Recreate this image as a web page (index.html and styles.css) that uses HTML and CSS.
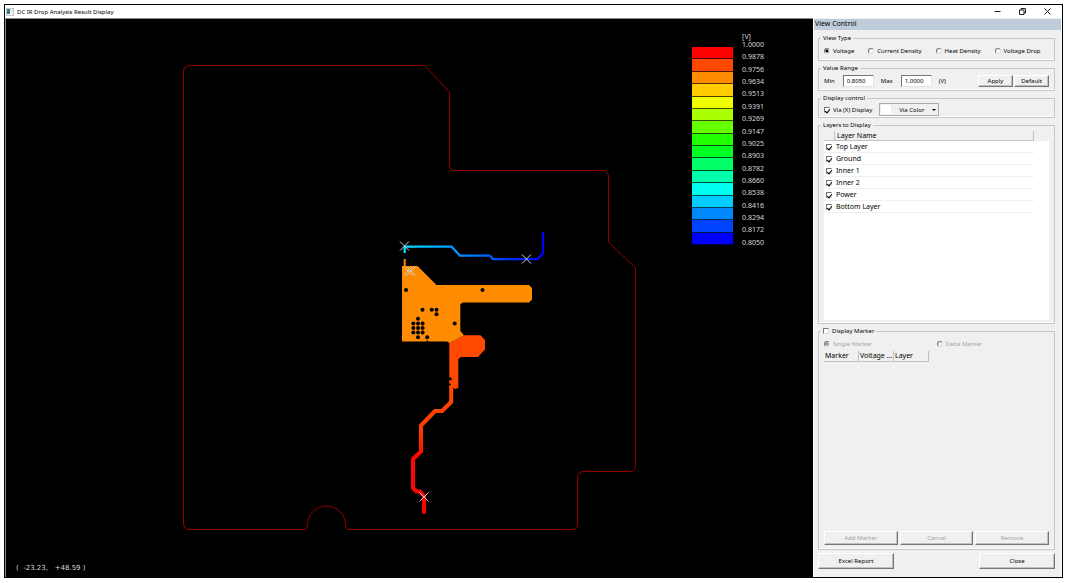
FILE: index.html
```html
<!DOCTYPE html>
<html lang="en">
<head>
    <meta charset="utf-8">
    <title>DC IR Drop Analysis Result Display</title>
    <link rel="stylesheet" href="styles.css">
</head>
<body>

    <div class="window">
        <header class="titlebar">
            <svg class="app-icon" viewBox="0 0 8 8">
                <rect x="0.5" y="0.5" width="7" height="7" fill="#f4f4f4" stroke="#c4c8cc"/>
                <rect x="1" y="1" width="3" height="5" fill="#2f7f78"/>
                <rect x="5" y="1" width="2" height="3" fill="#dfe6ea"/>
            </svg>
            <h1 class="title">DC IR Drop Analysis Result Display</h1>
            <div class="window-btns">
                <button class="window-btn" aria-label="Minimize">
                    <svg viewBox="0 0 7 7"><path d="M0.5 3.5H6.5"/></svg>
                </button>
                <button class="window-btn" aria-label="Restore">
                    <svg viewBox="0 0 7 7"><path d="M0.5 2H5V6.5H0.5ZM2 2V0.5H6.5V5H5"/></svg>
                </button>
                <button class="window-btn" aria-label="Close window">
                    <svg viewBox="0 0 7 7"><path d="M0.5 0.5L6.5 6.5M6.5 0.5L0.5 6.5"/></svg>
                </button>
            </div>
        </header>

        <main class="workspace">
            <section class="board">
                <svg class="board-view" viewBox="6 19 807 558">
                    <defs>
                        <linearGradient id="lowNet" gradientUnits="userSpaceOnUse" x1="404" y1="0" x2="543" y2="0">
                            <stop offset="0" stop-color="#00dcff"/>
                            <stop offset="0.3" stop-color="#00a4ff"/>
                            <stop offset="0.55" stop-color="#0070ff"/>
                            <stop offset="0.75" stop-color="#0030ff"/>
                            <stop offset="1" stop-color="#0000ff"/>
                        </linearGradient>
                        <linearGradient id="highNet" gradientUnits="userSpaceOnUse" x1="0" y1="385" x2="0" y2="513">
                            <stop offset="0" stop-color="#ff4a00"/>
                            <stop offset="0.35" stop-color="#ff3c00"/>
                            <stop offset="0.55" stop-color="#ff0800"/>
                            <stop offset="1" stop-color="#ff0000"/>
                        </linearGradient>
                        <path id="via" d="M-4.5 -4.5L4.5 4.5M4.5 -4.5L-4.5 4.5"/>
                    </defs>

                    <!-- board outline -->
                    <path class="outline" d="M190.5 65.5H425L449.5 92.5V165Q449.5 170.5 455 170.5H602Q608.5 170.5 608.5 177V242L635.5 268V465Q635.5 471.5 629 471.5H584Q577.5 471.5 577.5 478V523Q577.5 529.5 571 529.5H349Q345.5 529.5 345.5 525A19 19 0 0 0 307.5 525Q307.5 529.5 304 529.5H190Q183.5 529.5 183.5 523V72Q183.5 65.5 190.5 65.5Z"/>

                    <!-- copper -->
                    <path class="trace" stroke="url(#lowNet)" stroke-width="2.3" d="M404.7 253V246.7H451.7L460 255.7H490L493 259.2H537.3L543 253.5V232"/>
                    <path class="trace" stroke="#ff8c00" stroke-width="2" d="M404.7 259V267"/>
                    <path class="trace" stroke="url(#highNet)" stroke-width="4" d="M451.2 384V402L442 411H435L421 425.5V451.5L413 459V488L416.5 491.5H420L424 496V512" stroke-linecap="round"/>
                    <path fill="#ff4800" d="M449.3 343L464 335.3H480.5L485 340V349.5L478 357H461L458.3 359V388L455 389L452.5 387H449.3Z"/>
                    <path fill="#ff8c00" d="M402 266H417.5L436.5 285H529L532 288V299.5L529 302.5H462.5L460.3 304.5V331L464 335.3L449.5 343L447 341.5H402Z"/>

                    <!-- holes -->
                    <g>
                        <circle cx="406" cy="290" r="2"/><circle cx="482.5" cy="290" r="2"/>
                        <circle cx="422.5" cy="309.7" r="2"/><circle cx="431.7" cy="309.7" r="2"/>
                        <circle cx="436.5" cy="309.7" r="2"/><circle cx="436.5" cy="314.3" r="2"/>
                        <circle cx="454.7" cy="323.5" r="2"/><circle cx="418" cy="318.8" r="2"/>
                        <circle cx="413.4" cy="323.4" r="2"/><circle cx="418" cy="323.4" r="2"/><circle cx="422.6" cy="323.4" r="2"/>
                        <circle cx="413.4" cy="328" r="2"/><circle cx="418" cy="328" r="2"/><circle cx="422.6" cy="328" r="2"/>
                        <circle cx="413.4" cy="332.6" r="2"/><circle cx="418" cy="332.6" r="2"/><circle cx="422.6" cy="332.6" r="2"/>
                        <circle cx="418" cy="337.3" r="2"/><circle cx="427.2" cy="337.3" r="2"/>
                        <circle cx="427.2" cy="341.5" r="1"/>
                        <circle cx="450.3" cy="378.7" r="1.5"/><circle cx="449.8" cy="384.5" r="1"/>
                    </g>

                    <g class="vias">
                        <use href="#via" x="404.5" y="246"/>
                        <use href="#via" x="526.5" y="259"/>
                        <use href="#via" x="408" y="271"/>
                        <use href="#via" x="411" y="271"/>
                        <use href="#via" x="424" y="497"/>
                    </g>
                </svg>

                <div class="scale">
                    <div class="scale-bars">
                        <span style="background: #ff0000"></span>
                        <span style="background: #ff4800"></span>
                        <span style="background: #ff8c00"></span>
                        <span style="background: #ffcc00"></span>
                        <span style="background: #f0ff00"></span>
                        <span style="background: #aaff00"></span>
                        <span style="background: #66ff00"></span>
                        <span style="background: #22ff00"></span>
                        <span style="background: #00ff22"></span>
                        <span style="background: #00ff66"></span>
                        <span style="background: #00ffaa"></span>
                        <span style="background: #00fff0"></span>
                        <span style="background: #00ccff"></span>
                        <span style="background: #0088ff"></span>
                        <span style="background: #0044ff"></span>
                        <span style="background: #0000ff"></span>
                    </div>
                    <div class="scale-text">
                        <div class="scale-unit">[V]</div>
                        <div class="scale-labels">
                            <span>1.0000</span>
                            <span>0.9878</span>
                            <span>0.9756</span>
                            <span>0.9634</span>
                            <span>0.9513</span>
                            <span>0.9391</span>
                            <span>0.9269</span>
                            <span>0.9147</span>
                            <span>0.9025</span>
                            <span>0.8903</span>
                            <span>0.8782</span>
                            <span>0.8660</span>
                            <span>0.8538</span>
                            <span>0.8416</span>
                            <span>0.8294</span>
                            <span>0.8172</span>
                            <span>0.8050</span>
                        </div>
                    </div>
                </div>

                <div class="coords">(  -23.23,   +48.59 )</div>
            </section>

            <aside class="panel">
                <h2 class="panel-title">View Control</h2>
                <form class="panel-body">
                    <fieldset class="group">
                        <legend>View Type</legend>
                        <div class="row view-types">
                            <label><input type="radio" name="view" checked>Voltage</label>
                            <label><input type="radio" name="view">Current Density</label>
                            <label><input type="radio" name="view">Heat Density</label>
                            <label><input type="radio" name="view">Voltage Drop</label>
                        </div>
                    </fieldset>

                    <fieldset class="group">
                        <legend>Value Range</legend>
                        <div class="row">
                            <label class="range">Min <input type="text" value="0.8050"></label>
                            <label class="range">Max <input type="text" value="1.0000"></label>
                            <span>(V)</span>
                            <div class="range-btns">
                                <button type="button" class="btn">Apply</button>
                                <button type="button" class="btn">Default</button>
                            </div>
                        </div>
                    </fieldset>

                    <fieldset class="group">
                        <legend>Display control</legend>
                        <div class="row via-row">
                            <label><input type="checkbox" checked>Via (X) Display</label>
                            <div class="color-select">
                                <span class="swatch"></span>
                                <select aria-label="Via Color">
                                    <option>Via Color</option>
                                </select>
                                <svg class="arrow" viewBox="0 0 4 2"><path d="M0 0H4L2 2Z"/></svg>
                            </div>
                        </div>
                    </fieldset>

                    <fieldset class="group layers">
                        <legend>Layers to Display</legend>
                        <div class="layer-list">
                            <table>
                                <thead>
                                    <tr><th class="check"></th><th class="name">Layer Name</th><th></th></tr>
                                </thead>
                                <tbody>
                                    <tr><td><input type="checkbox" id="top" checked></td><td><label for="top">Top Layer</label></td></tr>
                                    <tr><td><input type="checkbox" id="ground" checked></td><td><label for="ground">Ground</label></td></tr>
                                    <tr><td><input type="checkbox" id="inner1" checked></td><td><label for="inner1">Inner 1</label></td></tr>
                                    <tr><td><input type="checkbox" id="inner2" checked></td><td><label for="inner2">Inner 2</label></td></tr>
                                    <tr><td><input type="checkbox" id="power" checked></td><td><label for="power">Power</label></td></tr>
                                    <tr><td><input type="checkbox" id="bottom" checked></td><td><label for="bottom">Bottom Layer</label></td></tr>
                                </tbody>
                            </table>
                        </div>
                    </fieldset>

                    <fieldset class="group markers">
                        <legend><label><input type="checkbox">Display Marker</label></legend>
                        <div class="marker-body">
                            <div class="marker-types">
                                <label><input type="radio" name="marker" checked disabled>Single Marker</label>
                                <label><input type="radio" name="marker" disabled>Delta Marker</label>
                            </div>
                            <table class="marker-table">
                                <thead>
                                    <tr><th>Marker</th><th>Voltage ...</th><th>Layer</th></tr>
                                </thead>
                            </table>
                            <div class="marker-btns">
                                <button type="button" class="btn" disabled>Add Marker</button>
                                <button type="button" class="btn" disabled>Cancel</button>
                                <button type="button" class="btn" disabled>Remove</button>
                            </div>
                        </div>
                    </fieldset>

                    <div class="panel-footer">
                        <button type="button" class="btn">Excel Report</button>
                        <button type="button" class="btn">Close</button>
                    </div>
                </form>
            </aside>
        </main>
    </div>

</body>
</html>
```
FILE: styles.css
```css
* {
    box-sizing: border-box;
}

body {
    margin: 0;
    padding: 4px 4px 5px;
    height: 100vh;
    background: #fff;
    color: #000;
    font-family: "Noto Sans", "Open Sans", sans-serif;
    font-size: 6px;
    line-height: 8px;
}

button, input, select {
    font: inherit;
    color: inherit;
    margin: 0;
}

h1, h2 {
    margin: 0;
    font-weight: 400;
}

.window {
    display: flex;
    flex-direction: column;
    height: 100%;
    border: 1px solid #000;
}

/* title bar */
.titlebar {
    display: flex;
    align-items: center;
    flex: none;
    height: 13px;
    padding: 0 11px 0 1px;
    gap: 3px;
}

.app-icon {
    width: 8px;
    height: 8px;
}

.title {
    font-size: 6px;
}

.window-btns {
    display: flex;
    gap: 18px;
    margin-left: auto;
}

.window-btn {
    display: flex;
    width: 7px;
    height: 7px;
    padding: 0;
    border: none;
    background: none;
}

.window-btn svg {
    width: 7px;
    height: 7px;
    fill: none;
    stroke: #222;
    stroke-width: 1;
}

.workspace {
    display: grid;
    grid-template-columns: 1fr 249px;
    flex: 1;
    min-height: 0;
}

/* board view */
.board {
    position: relative;
    background: #000;
    border: solid #8a8a8a;
    border-width: 1px 0 0 1px;
    min-height: 0;
    overflow: hidden;
}

.board-view {
    display: block;
    width: 100%;
    height: 100%;
}

.outline {
    fill: none;
    stroke: #960000;
    stroke-width: 1;
}

.trace {
    fill: none;
    stroke-linejoin: round;
}

.vias {
    stroke: #d0d0d0;
    stroke-width: 1;
}

.scale {
    position: absolute;
    top: 13px;
    right: 49px;
    display: flex;
    gap: 9px;
    color: #d8d8d8;
    font-size: 7px;
}

.scale-bars {
    display: flex;
    flex-direction: column;
    width: 41px;
    height: 198px;
    margin-top: 15px;
}

.scale-bars span {
    flex: 1;
    border-bottom: 1px solid #000000b0;
}

.scale-unit {
    padding-top: 1px;
}

.scale-labels {
    display: flex;
    flex-direction: column;
    height: 210px;
}

.scale-labels span {
    flex: 1;
}

.coords {
    position: absolute;
    left: 10px;
    bottom: 5px;
    color: #d8d8d8;
    font-family: "DejaVu Sans", sans-serif;
    font-size: 7px;
    white-space: pre;
}

/* control panel */
.panel {
    display: flex;
    flex-direction: column;
    min-height: 0;
    background: #f0f0f0;
    border-left: 1px solid #fff;
    border-right: 1px solid #fff;
}

.panel-title {
    margin-top: 1px;
    padding: 0 1px 1px;
    background: #bfcddb;
    font-size: 7px;
    line-height: 10px;
}

.panel-body {
    display: flex;
    flex-direction: column;
    flex: 1;
    gap: 3px;
    min-height: 0;
    padding: 4px 6px 8px 4px;
}

.group {
    min-width: 0;
    margin: 0;
    padding: 0 5px;
    border: 1px solid #c6c6c6;
    box-shadow: inset 0 -1px #fff;
}

.group legend {
    padding: 0 2px;
    margin-left: -3px;
}

.row {
    display: flex;
    align-items: center;
    height: 18px;
    gap: 7px;
}

.via-row {
    height: 15px;
}

label {
    display: inline-flex;
    align-items: center;
    gap: 3px;
    white-space: nowrap;
}

input[type="radio"], input[type="checkbox"] {
    appearance: none;
    flex: none;
    width: 6px;
    height: 6px;
    border: 1px solid;
    border-color: #777 #ddd #ddd #777;
    background: #fff;
}

input[type="radio"] {
    border-radius: 50%;
}

input[type="radio"]:checked {
    background: radial-gradient(#000 1px, #fff 2px);
}

input[type="radio"]:disabled {
    background: #f0f0f0;
}

input[type="radio"]:checked:disabled {
    background: radial-gradient(#888 1px, #f0f0f0 2px);
}

input[type="checkbox"]:checked::before {
    content: "";
    display: block;
    width: 2px;
    height: 4px;
    margin-left: 1px;
    border: solid #000;
    border-width: 0 1px 1px 0;
    transform: rotate(40deg);
}

label:has(:disabled) {
    color: #a4a4a4;
}

.view-types {
    gap: 14px;
}

.range {
    gap: 8px;
}

.range input {
    width: 31px;
    height: 12px;
    padding: 0 3px;
    border: 1px solid;
    border-color: #777 #e4e4e4 #e4e4e4 #777;
    background: #fff;
}

.btn {
    padding: 0;
    border: 1px solid;
    border-color: #fff #777 #777 #fff;
    background: #f0f0f0;
    box-shadow: inset -1px -1px #c0c0c0;
}

.btn:disabled {
    color: #a4a4a4;
}

.range-btns {
    display: flex;
    gap: 1px;
    margin-left: auto;
}

.range-btns .btn {
    width: 35px;
    height: 12px;
}

.color-select {
    display: flex;
    align-items: center;
    width: 60px;
    height: 13px;
    padding: 0 2px 0 1px;
    border: 1px solid #aaa;
}

.swatch {
    width: 10px;
    height: 9px;
    background: #fff;
}

.color-select select {
    appearance: none;
    flex: 1;
    min-width: 0;
    padding: 0 0 0 8px;
    border: none;
    background: none;
}

.arrow {
    width: 4px;
    height: 2px;
    pointer-events: none;
}

/* tables */
table {
    border-collapse: separate;
    border-spacing: 0;
    table-layout: fixed;
    font-size: 7px;
}

th {
    padding: 0 2px;
    background: #f0f0f0;
    border: solid #c0c0c0;
    border-width: 0 1px 1px 0;
    font-weight: 400;
    text-align: left;
    white-space: nowrap;
}

.layers {
    flex: 11;
    padding-bottom: 3px;
}

.layer-list {
    height: 100%;
    border-top: 2px solid #f0f0f0;
    background: #fff;
}

.layer-list table {
    width: 100%;
}

.layer-list th {
    height: 10px;
}

.layer-list th:last-child {
    border: none;
}

.layer-list .check {
    width: 11px;
}

.layer-list .name {
    width: 199px;
}

.layer-list td {
    height: 12px;
    padding: 0 1px;
    border-bottom: 1px solid #f0f0f0;
}

.layer-list td:first-child {
    padding: 0 2px;
}

.layer-list td input, .layer-list td label {
    display: block;
}

.markers {
    flex: 12;
    padding-bottom: 4px;
}

.marker-body {
    display: flex;
    flex-direction: column;
    height: 100%;
    padding-top: 4px;
}

.marker-types {
    display: grid;
    grid-template-columns: 1fr 1fr;
    margin-bottom: 3px;
}

.marker-table {
    width: 105px;
}

.marker-table th {
    height: 11px;
    padding: 0 1px;
}

.marker-btns {
    display: grid;
    grid-template-columns: 1fr 1fr 1fr;
    gap: 2px;
    margin-top: auto;
}

.marker-btns .btn {
    height: 14px;
}

.panel-footer {
    display: flex;
    justify-content: space-between;
}

.panel-footer .btn {
    width: 76px;
    height: 16px;
}
```
